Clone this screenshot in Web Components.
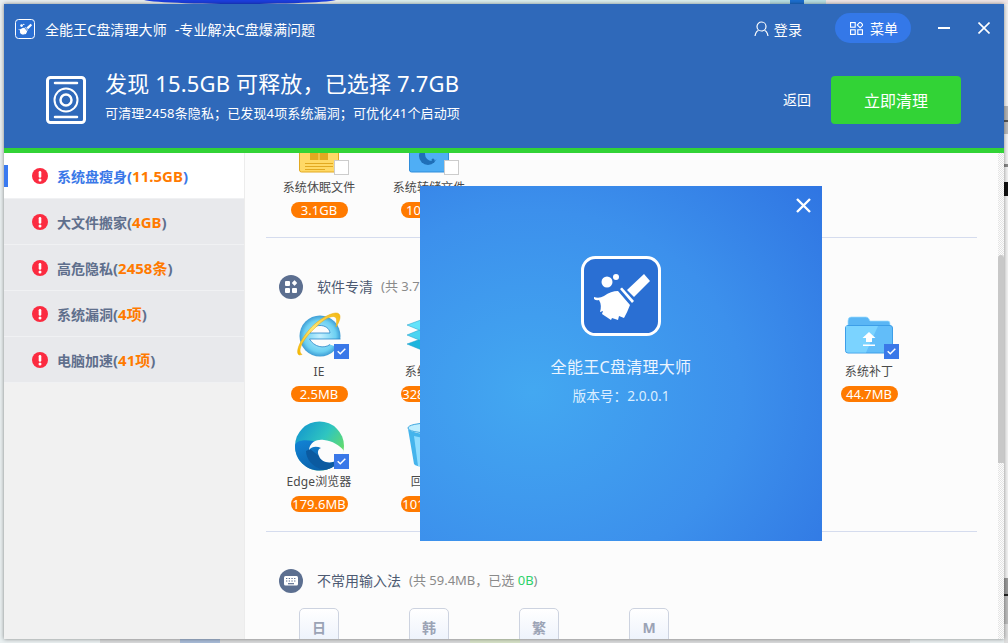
<!DOCTYPE html>
<html lang="zh-CN">
<head>
<meta charset="utf-8">
<title>全能王C盘清理大师</title>
<style>
  html, body { margin: 0; height: 100%; overflow: hidden; }
  body {
    font-family: "Noto Sans", "Noto Sans CJK SC", sans-serif;
    background: #e9eff0;
  }
</style>
</head>
<body>
<cc-desktop>
  <cc-app>
    <cc-header slot="header"></cc-header>

    <cc-nav-item slot="nav" label="系统盘瘦身" amount="11.5GB" active></cc-nav-item>
    <cc-nav-item slot="nav" label="大文件搬家" amount="4GB"></cc-nav-item>
    <cc-nav-item slot="nav" label="高危隐私" amount="2458条"></cc-nav-item>
    <cc-nav-item slot="nav" label="系统漏洞" amount="4项"></cc-nav-item>
    <cc-nav-item slot="nav" label="电脑加速" amount="41项"></cc-nav-item>

    <cc-section headless style="margin-top:-26px">
      <cc-tile name="系统休眠文件" size="3.1GB" icon="hiber"></cc-tile>
      <cc-tile name="系统转储文件" size="10.2MB" icon="dump"></cc-tile>
    </cc-section>

    <cc-section title="软件专清" total="(共 3.7GB，已选 3.7GB)" icon="apps">
      <cc-tile name="IE" size="2.5MB" icon="ie" checked></cc-tile>
      <cc-tile name="系统缓存" size="328.4MB" icon="stack" checked></cc-tile>
      <cc-tile></cc-tile>
      <cc-tile></cc-tile>
      <cc-tile></cc-tile>
      <cc-tile name="系统补丁" size="44.7MB" icon="folder" checked></cc-tile>
      <cc-tile name="Edge浏览器" size="179.6MB" icon="edge" checked></cc-tile>
      <cc-tile name="回收站" size="101.9MB" icon="bin" checked></cc-tile>
    </cc-section>

    <cc-section title="不常用输入法" total="(共 59.4MB，已选 " zero="0B" icon="keys" last>
      <cc-key>日</cc-key>
      <cc-key>韩</cc-key>
      <cc-key>繁</cc-key>
      <cc-key>M</cc-key>
    </cc-section>

    <cc-about slot="overlay"></cc-about>
  </cc-app>
</cc-desktop>

<script>
const ICONS = {
  hiber: `<svg width="56" height="48" viewBox="0 0 56 48">
      <rect x="8.5" y="5" width="39" height="40" rx="2" fill="#ffd966" stroke="#e2a920"/>
      <path d="M19 26h8.500v7H19zM28.500 26H37v7h-8.500z" fill="#e2a920"/>
      <path d="M14 36.500h28M14 39.500h28M14 42.500h20" stroke="#e2a920" stroke-width="1"/>
    </svg>`,
  dump: `<svg width="56" height="48" viewBox="0 0 56 48">
      <rect x="8.5" y="5" width="39" height="40" rx="2" fill="#4faef5" stroke="#2f8ddb"/>
      <circle cx="27" cy="29" r="9" fill="#1f6fb8"/>
      <circle cx="31" cy="27" r="7" fill="#4faef5"/>
      <circle cx="32" cy="33" r="1.500" fill="#1f6fb8"/>
    </svg>`,
  ie: `<svg width="56" height="48" viewBox="0 0 56 48">
      <defs>
        <radialGradient id="ieb" cx=".5" cy=".5" r=".55"><stop offset="0" stop-color="#c5f1ff"/><stop offset=".7" stop-color="#6cd0f2"/><stop offset="1" stop-color="#2a86c8"/></radialGradient>
        <linearGradient id="ier" x1="0" y1="1" x2="1" y2="0"><stop offset="0" stop-color="#f5b800"/><stop offset=".5" stop-color="#ffe777"/><stop offset="1" stop-color="#f3b70e"/></linearGradient>
      </defs>
      <circle cx="29" cy="25" r="20.500" fill="url(#ieb)"/>
      <path d="M19 22C20 12 38 12 39 22z" fill="#fcfcfc" stroke="#2a86c8" stroke-width=".8"/>
      <path d="M18.500 28H52V38L39 33.500C33 38 23 36 18.500 28z" fill="#fcfcfc"/>
      <path d="M18.500 28H49.500M39 33.500C33 38 23 36 18.500 28" fill="none" stroke="#2a86c8" stroke-width=".8"/>
      <path d="M8 44C3 40 13 22 25 12 35 4 45 0 48 3c2 2 1 7-3 13 1-5 1-9-1-10-3-2-11 2-19 10C14 26 5 39 11 43.500z" fill="url(#ier)" stroke="#eaa800" stroke-width=".5"/>
    </svg>`,
  stack: `<svg width="56" height="48" viewBox="0 0 56 48">
      <g stroke="#1f9cc9" stroke-width=".5">
        <path d="M28 25 50 33 28 42 6 33z" fill="#1cb5de"/>
        <path d="M28 15 50 24 28 33 6 24z" fill="#4ad4f2"/>
        <path d="M28 6 50 14 28 23 6 14z" fill="#63e3fb"/>
      </g>
    </svg>`,
  folder: `<svg width="56" height="48" viewBox="0 0 56 48">
      <path d="M7 10q0-4 3-4h15q2 0 3 2l1 2h18q2 0 2 3v5H7z" fill="#5ab6f5" stroke="#9bdcff" stroke-width=".7"/>
      <rect x="4.500" y="14.500" width="47" height="27.500" rx="2.500" fill="#62bdf9" stroke="#3d9ee8"/>
      <path d="M5 15h32L25 41.500H7q-2 0-2-2z" fill="#7bd3ff"/>
      <path d="M28 21l6.500 6H31v4h-6v-4h-3.500zM22 33.500h12V35H22z" fill="#fff"/>
    </svg>`,
  edge: `<svg width="56" height="48" viewBox="0 0 56 48" style="overflow:visible">
      <defs>
        <linearGradient id="eg1" x1="0" y1="0" x2="1" y2=".7"><stop offset="0" stop-color="#0f8fd0"/><stop offset=".55" stop-color="#2fc5c0"/><stop offset="1" stop-color="#6fe05a"/></linearGradient>
        <linearGradient id="eg2" x1="0" y1="0" x2=".6" y2="1"><stop offset="0" stop-color="#1284d6"/><stop offset="1" stop-color="#0b5fa8"/></linearGradient>
      </defs>
      <circle cx="28.500" cy="25" r="24.500" fill="url(#eg1)"/>
      <path d="M4 25c0 14 11 24.500 24.500 24.500 10 0 19-6 22-15L40 28 22 20C12 18 4 20 4 25z" fill="url(#eg2)"/>
      <path d="M15 30C15 38 22 47 32 48.500 38 49.500 46 45 49 38 42 44 31 43 28 35L19 28z" fill="#0b5aa0"/>
      <path d="M18 29C19 20 27 18 33 19 41 20 49 24 53 30 51 35 49 38 45 40 38 43 30 41 28 35 26 31 27 28 30 27 26 25 21 25 18 29z" fill="#fcfcfc"/>
    </svg>`,
  bin: `<svg width="56" height="48" viewBox="0 0 56 48">
      <ellipse cx="28" cy="7" rx="21" ry="5" fill="#bfeeff" stroke="#3fa8e0"/>
      <path d="M7 8l6 35q1 3 15 3t15-3l6-35q-6 5-21 5T7 8z" fill="#45b4ec"/>
      <path d="M13 15l4 30h7l-2-28z" fill="#8edcff"/>
    </svg>`,
  apps: `<svg width="24" height="24" viewBox="0 0 24 24">
      <circle cx="12" cy="12" r="12" fill="#5c6f90"/>
      <rect x="6" y="6" width="5" height="5" rx="1" fill="#fff"/>
      <rect x="6" y="13" width="5" height="5" rx="1" fill="#fff"/>
      <rect x="13" y="13" width="5" height="5" rx="1" fill="#fff"/>
      <rect x="13.500" y="6" width="4" height="4" rx=".5" fill="#fff" transform="rotate(45 15.500 8)"/>
    </svg>`,
  keys: `<svg width="24" height="24" viewBox="0 0 24 24">
      <circle cx="12" cy="12" r="12" fill="#5c6f90"/>
      <rect x="5" y="7" width="14" height="9.500" rx="1.500" fill="#fff"/>
      <path d="M7 9.500h10M7 12h10" stroke="#5c6f90" stroke-width="1.200" stroke-dasharray="1.300 1.400"/>
      <path d="M9 14.700h6" stroke="#5c6f90" stroke-width="1.200"/>
    </svg>`
};

class CcDesktop extends HTMLElement {
  constructor() {
    super();
    this.attachShadow({ mode: "open" }).innerHTML = `
      <style>
        :host { display: block; position: relative; width: 1008px; height: 643px; overflow: hidden; box-sizing: border-box; padding: 4px; }
        .wall { position: absolute; }
        .blob { left: 142px; top: -6px; width: 196px; height: 10px; background: #1c3fe0; border-radius: 50%; }
        .pale { left: 340px; top: 0; width: 432px; height: 4px; background: #dcefee; }
        .tab { left: 770px; top: 0; width: 56px; height: 4px; background: #b9e0e4; }
        .dot { left: 790px; top: 0; width: 14px; height: 4px; background: #1c6fd0; }
        .pink { left: 826px; top: 0; width: 182px; height: 4px; background: #f0e6e6; }
        .edge-r { right: 0; top: 4px; width: 4px; height: 639px;
          background: linear-gradient(#f2f2f2 0 102px, #b5b5b5 102px 116px, #555 116px 118px, #bbb 118px 130px, #f2f2f2 130px 160px, #888 160px 163px, #f2f2f2 163px 178px, #111 178px 192px, #f2f2f2 192px 574px, #999 574px 590px, #222 590px 592px, #bbb 592px 620px, #ddd 620px); }
        .strip { left: 100px; bottom: 0; width: 810px; height: 4px; background: #d9dadb; }
        .strip2 { left: 180px; bottom: 0; width: 40px; height: 4px; background: #a9bcd8; }
        .strip3 { left: 470px; bottom: 0; width: 50px; height: 4px; background: #d7e2c8; }
      </style>
      <div class="wall blob"></div><div class="wall pale"></div><div class="wall tab"></div><div class="wall dot"></div><div class="wall pink"></div>
      <div class="wall edge-r"></div><div class="wall strip"></div><div class="wall strip2"></div><div class="wall strip3"></div>
      <slot></slot>`;
  }
}

class CcApp extends HTMLElement {
  constructor() {
    super();
    this.attachShadow({ mode: "open" }).innerHTML = `
      <style>
        :host { display: flex; flex-direction: column; position: relative; width: 1000px; height: 635px; box-shadow: 0 0 4px rgba(0,0,0,.45); background: #fcfcfc; overflow: hidden; }
        .body { flex: 1; display: flex; min-height: 0; }
        nav { width: 240px; background: #f1f1f1; border-right: 1px solid #ececec; display: flex; flex-direction: column; }
        main { flex: 1; overflow: hidden; padding: 0 27px 0 21px; position: relative; }
        .track { position: absolute; right: 0; top: 0; bottom: 0; width: 6px;
          background: repeating-conic-gradient(#e4e4e4 0 25%, #fcfcfc 0 50%) 0 0 / 2px 2px; }
        .thumb { position: absolute; left: 0; top: 102px; width: 6px; height: 208px; background: #c8c8c8; border-radius: 3px 3px 0 0; }
      </style>
      <slot name="header"></slot>
      <div class="body">
        <nav><slot name="nav"></slot></nav>
        <main><slot></slot><div class="track"><div class="thumb"></div></div></main>
      </div>
      <slot name="overlay"></slot>`;
  }
}

class CcLogo extends HTMLElement {
  constructor() {
    super();
    const size = this.getAttribute("size") || 80;
    const frame = size > 40 ? 3 : 1;
    this.attachShadow({ mode: "open" }).innerHTML = `
      <style>
        :host { display: block; width: ${size}px; height: ${size}px; }
        div { box-sizing: border-box; width: 100%; height: 100%; background: #2a6fd3; border: ${frame}px solid #fff; border-radius: ${size * 0.18}px; }
        svg { display: block; width: 100%; height: 100%; }
      </style>
      <div><svg viewBox="3 3 74 74" fill="#fff">
        <circle cx="26" cy="26" r="5.500"/><circle cx="35" cy="21" r="3"/>
        <path d="M46 34 63 18 69 25 53 41z"/>
        <path d="M39 33 41 31.500 53 45 51 47z"/>
        <path d="M13 41q5 2 10-1 7-5 14-5l12 14q-3 8-6 13l-5-2-1 4-6-2-1 2-9-6 1-3-3 1q2-7-1-12-3 1-5-1z"/>
      </svg></div>`;
  }
}

class CcHeader extends HTMLElement {
  constructor() {
    super();
    this.attachShadow({ mode: "open" }).innerHTML = `
      <style>
        :host { display: flex; flex-direction: column; flex: none; height: 144px; background: #2f69ba; color: #fff; border-bottom: 5px solid #32d336; }
        .bar { height: 50px; display: flex; align-items: center; padding: 0 14px 0 11px; font-size: 14px; box-sizing: border-box; letter-spacing: .1px; }
        .bar cc-logo { margin-right: 10px; }
        .sub { margin-left: 8px; }
        .spacer { flex: 1; }
        .login { display: flex; align-items: center; gap: 5px; margin-right: 33px; }
        .menu { display: flex; align-items: center; gap: 7px; height: 30px; width: 76px; box-sizing: border-box; padding-left: 15px; border-radius: 15px; background: #3478e8; margin-right: 27px; margin-top: -2px; }
        .min { width: 12px; height: 2px; background: #fff; margin-right: 28px; margin-top: -2px; }
        .close { margin-top: -2px; display: block; }
        .hero { flex: 1; display: flex; align-items: flex-start; padding: 22px 43px 0 42px; }
        .disk { margin-right: 19px; flex: none; }
        .lines { flex: 1; margin-top: -8px; }
        h1 { margin: 0; font-size: 22px; font-weight: 400; line-height: 30px; letter-spacing: .16px; }
        p { margin: 6px 0 0; font-size: 13px; line-height: 18px; letter-spacing: .13px; }
        .back { font-size: 14px; margin-right: 20px; line-height: 48px; }
        button { width: 130px; height: 48px; border: 0; border-radius: 4px; background: #32d336; color: #fff; font: inherit; font-size: 16px; padding: 0; }
      </style>
      <div class="bar">
        <cc-logo size="20"></cc-logo>
        <span>全能王C盘清理大师</span><span class="sub">-专业解决C盘爆满问题</span>
        <span class="spacer"></span>
        <span class="login">
          <svg width="15" height="16" viewBox="0 0 15 16" fill="none" stroke="#fff" stroke-width="1.200"><circle cx="7.500" cy="5.500" r="4.500"/><path d="M1 15q1-5 3.500-5.500M14 15q-1-5-3.500-5.500"/></svg>
          <span>登录</span>
        </span>
        <span class="menu">
          <svg width="13" height="13" viewBox="0 0 14 14" fill="none" stroke="#fff" stroke-width="1.200"><rect x=".6" y=".6" width="5" height="5"/><rect x=".6" y="8.400" width="5" height="5"/><rect x="8.400" y="8.400" width="5" height="5"/><rect x="8.700" y=".9" width="4.400" height="4.400" transform="rotate(45 10.900 3.100)"/></svg>
          <span>菜单</span>
        </span>
        <span class="min"></span>
        <svg class="close" width="12" height="12" viewBox="0 0 12 12" stroke="#fff" stroke-width="1.600"><path d="M.5.5l11 11M11.500.5l-11 11"/></svg>
      </div>
      <div class="hero">
        <svg class="disk" width="40" height="48" viewBox="0 0 40 48" fill="none" stroke="#fff">
          <rect x="1.500" y="1.500" width="37" height="45" rx="3" stroke-width="3"/>
          <path d="M9 7h22M9 41h22" stroke-width="2.500" stroke-linecap="round"/>
          <circle cx="20" cy="24" r="11.500" stroke-width="2"/>
          <circle cx="20" cy="24" r="5.500" stroke-width="2.500"/>
        </svg>
        <div class="lines">
          <h1>发现 15.5GB 可释放，已选择 7.7GB</h1>
          <p>可清理2458条隐私；已发现4项系统漏洞；可优化41个启动项</p>
        </div>
        <span class="back">返回</span>
        <button>立即清理</button>
      </div>`;
  }
}

class CcNavItem extends HTMLElement {
  constructor() {
    super();
    const label = this.getAttribute("label");
    const amount = this.getAttribute("amount");
    this.attachShadow({ mode: "open" }).innerHTML = `
      <style>
        :host { display: flex; align-items: center; height: 46px; box-sizing: border-box; padding-left: 28px; background: #e8e9ec; border-bottom: 1px solid #f0f1f3; color: #5f6f8c; font-size: 14px; font-weight: 700; position: relative; }
        :host([active]) { background: #fff; color: #3a78e8; }
        :host([active])::before { content: ""; position: absolute; left: 0; top: 12px; width: 4px; height: 22px; background: #3a7af0; }
        svg { margin-right: 9px; flex: none; }
        .paren { font-size: 15px; }
        b { color: #ff7a00; font-weight: 700; }
      </style>
      <svg width="16" height="16" viewBox="0 0 16 16"><circle cx="8" cy="8" r="8" fill="#fb2b40"/><rect x="6.700" y="3" width="2.600" height="6.800" rx="1.300" fill="#fff"/><circle cx="8" cy="12" r="1.500" fill="#fff"/></svg>
      <span>${label}<span class="paren">(<b>${amount}</b>)</span></span>`;
  }
}

class CcSection extends HTMLElement {
  constructor() {
    super();
    const zero = this.getAttribute("zero");
    const total = this.getAttribute("total") || "";
    const head = this.hasAttribute("headless") ? "" : `
      <header>
        <span class="ico">${ICONS[this.getAttribute("icon")]}</span>
        <strong>${this.getAttribute("title")}</strong>
        <small>${total}${zero ? `<i>${zero}</i>)` : ""}</small>
      </header>`;
    this.attachShadow({ mode: "open" }).innerHTML = `
      <style>
        :host { display: block; border-bottom: 1px solid #d5dcee; padding-bottom: 19px; }
        :host([last]) { border-bottom: 0; padding-bottom: 0; }
        header { display: flex; align-items: center; height: 24px; padding-left: 13px; margin-top: 37px; margin-bottom: 12px; }
        :host([last]) header { margin-bottom: 15px; }
        .ico { width: 24px; height: 24px; margin-right: 14px; }
        .ico svg { display: block; }
        strong { font-size: 14px; font-weight: 400; color: #4d5a72; margin-top: -2px; }
        small { font-size: 13px; color: #8a8a8a; margin-left: 8px; margin-top: -3px; }
        i { font-style: normal; color: #2fd36a; }
        .grid { display: grid; grid-template-columns: repeat(6, 106px); column-gap: 4px; row-gap: 19px; }
      </style>
      ${head}
      <div class="grid"><slot></slot></div>`;
  }
}

class CcTile extends HTMLElement {
  constructor() {
    super();
    const name = this.getAttribute("name");
    const size = this.getAttribute("size");
    const icon = this.getAttribute("icon");
    const check = this.hasAttribute("checked")
      ? `<svg width="9" height="7" viewBox="0 0 9 7" fill="none" stroke="#fff" stroke-width="1.500"><path d="M.7 3.300 3.300 5.800 8.300.8"/></svg>` : "";
    this.attachShadow({ mode: "open" }).innerHTML = `
      <style>
        :host { display: flex; flex-direction: column; align-items: center; height: 91px; }
        .pic { position: relative; width: 56px; height: 48px; }
        .pic svg.art { display: block; }
        .box { position: absolute; right: -2px; bottom: 0; width: 15px; height: 15px; box-sizing: border-box; display: flex; align-items: center; justify-content: center; background: #fff; border: 1px solid #ccc; }
        :host([checked]) .box { background: #3a78e8; border-color: #3a78e8; }
        .name { margin-top: 4px; font-size: 12px; line-height: 18px; color: #4a4a4a; white-space: nowrap; letter-spacing: .1px; }
        .size { margin-top: 5px; width: 57px; height: 16px; border-radius: 8px; background: #ff7a00; color: #fff; font-size: 13px; line-height: 16px; text-align: center; white-space: nowrap; overflow: hidden; }
      </style>
      ${name ? `<div class="pic">${ICONS[icon].replace("<svg", '<svg class="art"')}<span class="box">${check}</span></div>
      <div class="name">${name}</div><div class="size">${size}</div>` : ""}`;
  }
}

class CcKey extends HTMLElement {
  constructor() {
    super();
    this.attachShadow({ mode: "open" }).innerHTML = `
      <style>
        :host { display: block; justify-self: center; width: 40px; height: 40px; box-sizing: border-box; border: 1px solid #cdd3e0; border-radius: 5px; background: linear-gradient(#fff, #eaf0fb); color: #9ba3b5; font-size: 14px; font-weight: 700; line-height: 38px; text-align: center; }
      </style>
      <slot></slot>`;
  }
}

class CcAbout extends HTMLElement {
  constructor() {
    super();
    this.attachShadow({ mode: "open" }).innerHTML = `
      <style>
        :host { position: absolute; left: 416px; top: 182px; width: 402px; height: 355px; box-sizing: border-box; padding-top: 70px; display: flex; flex-direction: column; align-items: center; color: #fff; background: radial-gradient(ellipse 380px 330px at 28% 58%, #43a8f1 0%, #3c90ec 55%, #2f74e2 100%); }
        .x { position: absolute; right: 11px; top: 12px; }
        h2 { margin: 19px 0 0; font-size: 16px; font-weight: 400; line-height: 24px; color: #eaf4ff; letter-spacing: .3px; }
        p { margin: 8px 0 0; font-size: 13.700px; line-height: 18px; color: #dbeeff; }
      </style>
      <svg class="x" width="15" height="15" viewBox="0 0 15 15" stroke="#fff" stroke-width="2.400"><path d="M1 1l13 13M14 1 1 14"/></svg>
      <cc-logo size="80"></cc-logo>
      <h2>全能王C盘清理大师</h2>
      <p>版本号：2.0.0.1</p>`;
  }
}

customElements.define("cc-logo", CcLogo);
customElements.define("cc-desktop", CcDesktop);
customElements.define("cc-app", CcApp);
customElements.define("cc-header", CcHeader);
customElements.define("cc-nav-item", CcNavItem);
customElements.define("cc-section", CcSection);
customElements.define("cc-tile", CcTile);
customElements.define("cc-key", CcKey);
customElements.define("cc-about", CcAbout);
</script>
</body>
</html>
